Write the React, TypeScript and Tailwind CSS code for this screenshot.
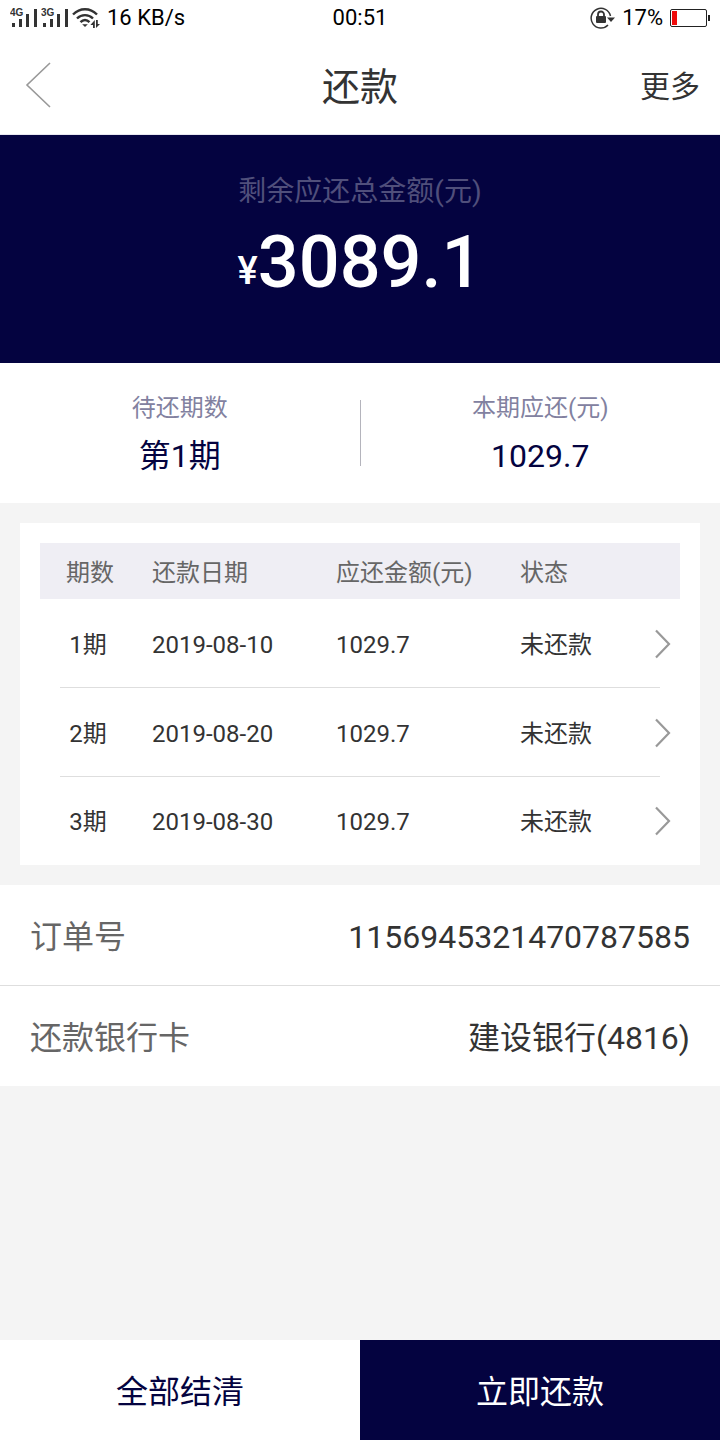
import React from 'react';

interface Installment {
  period: string;
  date: string;
  amount: string;
  status: string;
}

const installments: Installment[] = [
  { period: '1期', date: '2019-08-10', amount: '1029.7', status: '未还款' },
  { period: '2期', date: '2019-08-20', amount: '1029.7', status: '未还款' },
  { period: '3期', date: '2019-08-30', amount: '1029.7', status: '未还款' },
];

const details = [
  { label: '订单号', value: '1156945321470787585' },
  { label: '还款银行卡', value: '建设银行(4816)' },
];

const SignalIcon = ({ label }: { label: string }) => (
  <svg width="28" height="20" viewBox="0 0 28 20" fill="#333">
    <text x="0" y="8" fontSize="10" fontWeight="700" fontFamily="Liberation Sans, sans-serif">
      {label}
    </text>
    <rect x="2" y="15" width="3" height="4" />
    <rect x="9" y="11" width="3" height="8" />
    <rect x="16" y="6" width="3" height="13" />
    <rect x="24" y="1" width="3" height="18" />
  </svg>
);

const WifiIcon = () => (
  <svg width="28" height="22" viewBox="0 0 28 22" fill="none" stroke="#333" strokeWidth="2.4">
    <path d="M1 7.5C8 .4 18 .4 25 7.5" />
    <path d="M5 11.5C9.500 7 16.500 7 21 11.500" />
    <path d="M8.500 15.200C11.300 12.300 14.700 12.300 17.500 15.200" />
    <path d="M10.200 17.200h5.600L13 20z" fill="#333" stroke="none" />
    <path d="M22.800 13v8h-1.800v-3h-2.600zM24 21v-8h1.800v4h2.200z" fill="#333" stroke="none" />
  </svg>
);

const RotationLockIcon = () => (
  <svg width="25" height="22" viewBox="0 0 25 22" fill="none" stroke="#333" strokeWidth="1.500">
    <path d="M20.500 9A9.800 9.800 0 1 0 18 18" />
    <path d="M17 10.500h8L21 15z" fill="#333" stroke="none" />
    <rect x="6" y="9" width="10" height="7" rx="1" fill="#333" stroke="none" />
    <path d="M8 9.500V7.500a3 3 0 0 1 6 0v2" strokeWidth="1.800" />
  </svg>
);

const BatteryIcon = () => (
  <svg width="40" height="18" viewBox="0 0 40 18" fill="none">
    <rect x=".5" y=".5" width="36" height="17" rx="1.500" stroke="#222" />
    <rect x="2" y="2" width="5" height="14" fill="#f00b0b" />
    <rect x="38" y="6" width="2" height="6" fill="#222" />
  </svg>
);

const StatusBar = () => (
  <div className="grid h-9 grid-cols-[1fr_auto_1fr] items-center px-[10px] text-[22px] leading-6 text-black">
    <div className="flex items-center gap-[3px]">
      <SignalIcon label="4G" />
      <SignalIcon label="3G" />
      <WifiIcon />
      <span className="ml-1">16 KB/s</span>
    </div>
    <span>00:51</span>
    <div className="flex items-center justify-end gap-[7px]">
      <RotationLockIcon />
      <span>17%</span>
      <BatteryIcon />
    </div>
  </div>
);

const Header = () => (
  <header className="grid h-[98px] grid-cols-[1fr_auto_1fr] items-center px-5 text-[#333]">
    <button type="button" aria-label="返回" className="justify-self-start pl-1">
      <svg width="28" height="46" viewBox="0 0 28 46" fill="none" stroke="#999" strokeWidth="1.600">
        <path d="M26 1L3 23L26 45" />
      </svg>
    </button>
    <h1 className="pt-1 text-[38px] leading-12">还款</h1>
    <button type="button" className="justify-self-end pt-1 text-[30px] leading-10">
      更多
    </button>
  </header>
);

const SummaryItem = ({ label, value }: { label: string; value: string }) => (
  <div className="flex-1 pt-1.5 text-center">
    <p className="text-2xl text-[#8281a0]">{label}</p>
    <p className="mt-2 text-[32px] leading-12 text-[#040340]">{value}</p>
  </div>
);

const InstallmentTable = () => (
  <div className="m-5 bg-white px-5 pt-5">
    <table className="w-full table-fixed text-left text-2xl text-[#333]">
      <thead>
        <tr className="h-14 bg-[#efeef4] text-[#666]">
          <th className="w-[100px] pt-1 text-center font-normal">期数</th>
          <th className="w-[184px] px-3 pt-1 font-normal">还款日期</th>
          <th className="w-[184px] px-3 pt-1 font-normal">应还金额(元)</th>
          <th className="px-3 pt-1 font-normal">状态</th>
        </tr>
      </thead>
      <tbody>
        {installments.map((item, index) => (
          <tr key={item.period} className="relative h-[89px] last:h-[88px]">
            <td className="pr-1 pt-0.5 text-center">{item.period}</td>
            <td className="px-3 pt-0.5">{item.date}</td>
            <td className="px-3 pt-0.5">{item.amount}</td>
            <td className="pl-3 pr-2">
              <div className="flex items-center justify-between">
                <span className="pt-0.5">{item.status}</span>
                <button type="button" aria-label="查看详情">
                  <svg width="18" height="30" viewBox="0 0 18 30" fill="none" stroke="#999" strokeWidth="2.200">
                    <path d="M2 1.500L15 15L2 28.500" />
                  </svg>
                </button>
              </div>
              {index < installments.length - 1 && (
                <span className="absolute inset-x-5 bottom-0 h-px bg-[#dedede]"></span>
              )}
            </td>
          </tr>
        ))}
      </tbody>
    </table>
  </div>
);

const App: React.FC = () => {
  return (
    <div className="flex min-h-screen flex-col bg-[#f4f4f4] font-['Roboto','Noto_Sans_CJK_SC',sans-serif]">
      <div className="border-b border-[#e8e8f0] bg-white">
        <StatusBar />
        <Header />
      </div>

      {/* 剩余金额 */}
      <section className="bg-[#040340] pb-[54px] pt-10 text-center">
        <p className="text-[28px] leading-[34px] text-[#504f7b]">剩余应还总金额(元)</p>
        <p className="flex items-end justify-center pt-2 font-medium text-white">
          <span className="text-[38px] leading-[76px]">¥</span>
          <span className="text-[72px] leading-[92px]">3089.1</span>
        </p>
      </section>

      {/* 本期概览 */}
      <section className="flex h-[140px] items-center bg-white">
        <SummaryItem label="待还期数" value="第1期" />
        <div className="h-[66px] w-px bg-[#b4b4bc]"></div>
        <SummaryItem label="本期应还(元)" value="1029.7" />
      </section>

      <InstallmentTable />

      <dl className="divide-y divide-[#dedede] bg-white">
        {details.map((item) => (
          <div key={item.label} className="flex items-center justify-between px-[30px] pb-6 pt-7 text-[32px] leading-12">
            <dt className="text-[#666]">{item.label}</dt>
            <dd className="text-[#333]">{item.value}</dd>
          </div>
        ))}
      </dl>

      {/* 底部操作 */}
      <div className="mt-auto flex h-[100px] text-[32px]">
        <button type="button" className="flex-1 bg-white pt-1 text-[#040340]">
          全部结清
        </button>
        <button type="button" className="flex-1 bg-[#040340] pt-1 text-white">
          立即还款
        </button>
      </div>
    </div>
  );
};

export default App;
